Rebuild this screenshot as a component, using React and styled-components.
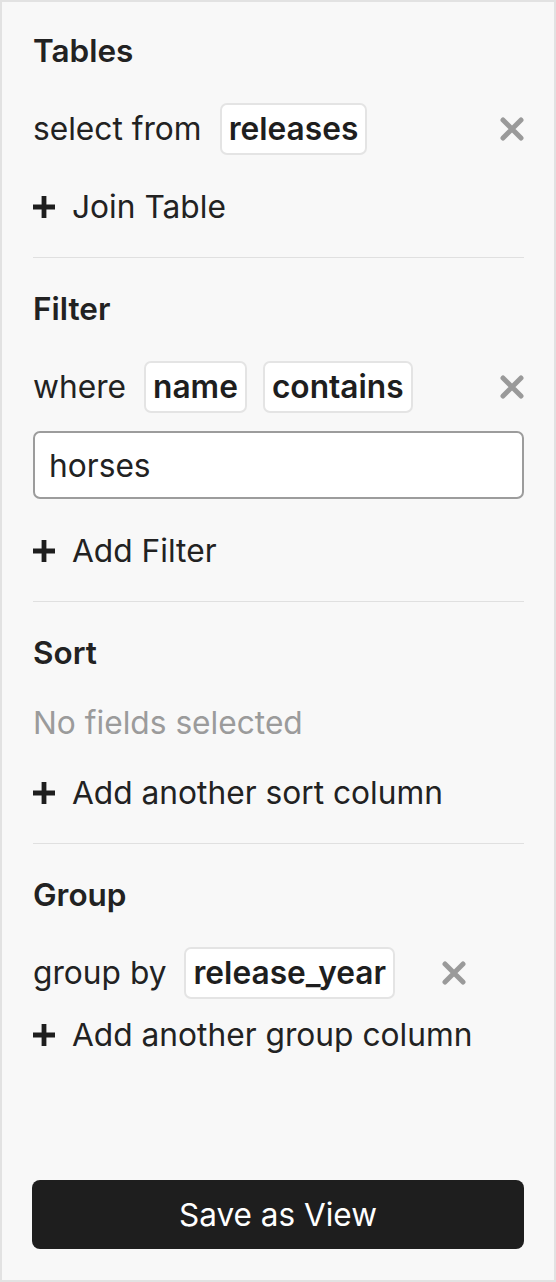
import React from 'react';
import styled, { createGlobalStyle } from 'styled-components';

const GlobalStyle = createGlobalStyle`
  html, body {
    margin: 0;
    padding: 0;
    background: #f8f8f8;
  }
  * {
    box-sizing: border-box;
  }
`;

const Panel = styled.div`
  display: flex;
  flex-direction: column;
  height: 100vh;
  border: 2px solid #e2e2e2;
  background: #f8f8f8;
  padding: 0 30px 31px 31px;
  font-family: Inter, 'Noto Sans', sans-serif;
  color: #222;
  font-size: 31.7px;
  line-height: 36px;
`;

const Section = styled.section`
  display: flex;
  flex-direction: column;
  gap: 34px;
  padding: ${(props) => (props.first ? '31px' : '33px')} 0 32px;
  border-bottom: ${(props) => (props.last ? 'none' : '1px solid #e0e0e0')};
`;

const Heading = styled.h2`
  margin: 0;
  font-size: 31.5px;
  font-weight: 600;
  line-height: 36px;
  color: #222;
`;

const Row = styled.div`
  display: flex;
  align-items: center;
  height: 52px;
`;

const Label = styled.span`
  margin-right: 18px;
`;

const Chip = styled.span`
  display: inline-flex;
  align-items: center;
  height: 52px;
  padding: 0 7px;
  margin-right: 16px;
  background: #fff;
  border: 2px solid #e4e4e4;
  border-radius: 7px;
  font-weight: 600;
  color: #1e1e1e;
`;

const Remove = styled.button`
  display: flex;
  align-items: center;
  justify-content: center;
  padding: 0;
  border: none;
  background: none;
  width: 24px;
  height: 24px;
  margin-left: ${(props) => (props.inline ? '31px' : 'auto')};
  cursor: pointer;
`;

const Stack = styled.div`
  display: flex;
  flex-direction: column;
  gap: 18px;
`;

const TextInput = styled.input`
  width: 100%;
  height: 68px;
  padding: 0 14px;
  border: 2px solid #9c9c9c;
  border-radius: 7px;
  background: #fff;
  font-family: inherit;
  font-size: 31.7px;
  color: #222;
  outline: none;
`;

const AddLink = styled.div`
  display: flex;
  align-items: center;
  gap: 17px;
  color: #222;
  cursor: pointer;
`;

const Muted = styled.div`
  color: #9b9b9b;
`;

const Spacer = styled.div`
  flex: 1;
`;

const SaveButton = styled.button`
  width: calc(100% + 1px);
  margin-left: -1px;
  height: 69px;
  border: none;
  border-radius: 8px;
  background: #1e1e1e;
  color: #fff;
  font-family: inherit;
  font-size: 31.5px;
  cursor: pointer;
`;

const CloseIcon = () => (
  <svg width="24" height="24" viewBox="0 0 24 24">
    <path d="M3 3 L21 21 M21 3 L3 21" stroke="#9a9a9a" strokeWidth="5" strokeLinecap="round" />
  </svg>
);

const PlusIcon = () => (
  <svg width="22" height="22" viewBox="0 0 22 22">
    <path d="M11 0 V22 M0 11 H22" stroke="#1e1e1e" strokeWidth="4.8" strokeLinecap="butt" />
  </svg>
);

const Add = ({ children }) => (
  <AddLink>
    <PlusIcon />
    <span>{children}</span>
  </AddLink>
);

export default function App() {
  return (
    <>
      <GlobalStyle />
      <Panel>
        <Section first>
          <Heading>Tables</Heading>
          <Row>
            <Label>select from</Label>
            <Chip>releases</Chip>
            <Remove aria-label="Remove table">
              <CloseIcon />
            </Remove>
          </Row>
          <Add>Join Table</Add>
        </Section>

        <Section>
          <Heading>Filter</Heading>
          <Stack>
            <Row>
              <Label>where</Label>
              <Chip>name</Chip>
              <Chip>contains</Chip>
              <Remove aria-label="Remove filter">
                <CloseIcon />
              </Remove>
            </Row>
            <TextInput defaultValue="horses" />
          </Stack>
          <Add>Add Filter</Add>
        </Section>

        <Section>
          <Heading>Sort</Heading>
          <Muted>No fields selected</Muted>
          <Add>Add another sort column</Add>
        </Section>

        <Section last>
          <Heading>Group</Heading>
          <Stack>
            <Row>
              <Label>group by</Label>
              <Chip>release_year</Chip>
              <Remove inline aria-label="Remove group">
                <CloseIcon />
              </Remove>
            </Row>
            <Add>Add another group column</Add>
          </Stack>
        </Section>

        <Spacer />
        <SaveButton>Save as View</SaveButton>
      </Panel>
    </>
  );
}
